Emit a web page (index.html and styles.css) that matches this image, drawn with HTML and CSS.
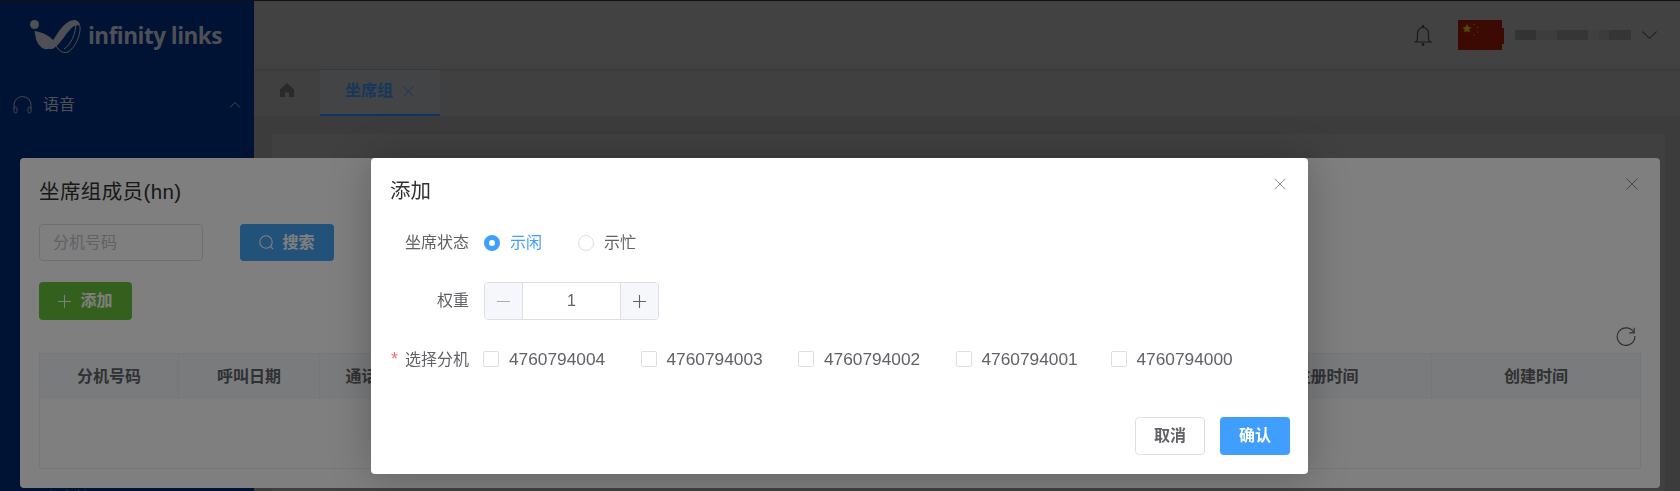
FILE: index.html
```html
<!DOCTYPE html>
<html lang="zh-CN">
<head>
<meta charset="UTF-8">
<title>坐席组</title>
<link rel="stylesheet" href="styles.css">
</head>
<body>
<div class="app">
    <aside class="sidebar">
        <div class="logo">
            <svg class="logo-mark" width="56" height="42" viewBox="0 0 56 42">
                <circle cx="4.5" cy="9.5" r="4.5" fill="#9ca0aa"/>
                <path d="M4.5 16C12 17 20 21 24 26L18 34C12 35 8 30 6 24Z" fill="#9ca0aa"/>
                <path d="M18 34C24 24 30 12 38 7C44 3 50 5 50 11C46 9 42 12 38 17C33 23 28 32 22 34Z" fill="#9ca0aa"/>
                <path d="M50 11C51 20 45 33 38 37C32 39 27 35 24 26M46 8C46 18 41 30 34 34" fill="none" stroke="#9ca0aa" stroke-width="1"/>
            </svg>
            <span class="logo-text">infinity links</span>
        </div>
        <div class="menu-item">
            <svg width="19" height="18" viewBox="0 0 19 18" fill="none" stroke="#8a8f9a" stroke-width="1">
                <path d="M1 13V9a8.500 8.500 0 0 1 17 0v4"/>
                <rect x="1" y="11" width="3" height="6" rx="1.500"/>
                <rect x="15" y="11" width="3" height="6" rx="1.500"/>
            </svg>
            <span class="menu-label">语音</span>
            <svg class="menu-arrow" width="10" height="6" viewBox="0 0 10 6" fill="none" stroke="#8a8f9a" stroke-width="1"><path d="M0 5.500L5 .5l5 5"/></svg>
        </div>
        <div class="menu-sub">坐席管理</div>
    </aside>
    <div class="main">
        <header class="topbar">
            <svg width="20" height="22" viewBox="0 0 20 22" fill="none" stroke="#333" stroke-width="1.200">
                <path d="M1 18h18M3 18c1-1 1.500-2 1.500-4V9a5.500 5.500 0 0 1 11 0v5c0 2 .5 3 1.500 4"/>
                <circle cx="10" cy="2.500" r=".8"/>
                <circle cx="10" cy="20.500" r=".8"/>
            </svg>
            <svg class="flag" width="46" height="30" viewBox="0 0 46 30">
                <rect width="44" height="30" fill="#7a1406"/>
                <rect x="44" y="8" width="2" height="16" fill="#7a1406"/>
                <polygon points="9,4 10.500,7 13.500,7.400 11.200,9.500 11.800,12.500 9,11 6.200,12.500 6.800,9.500 4.500,7.400 7.500,7" fill="#a89010"/>
                <circle cx="16" cy="4.500" r=".8" fill="#906810"/>
                <circle cx="19.500" cy="7.500" r=".8" fill="#906810"/>
                <circle cx="19.500" cy="12" r=".8" fill="#906810"/>
                <circle cx="16" cy="15" r=".8" fill="#906810"/>
            </svg>
            <div class="user-name"></div>
            <svg width="15" height="8" viewBox="0 0 15 8" fill="none" stroke="#444" stroke-width="1.100"><path d="M.4.5L7.500 7.300 14.600.5"/></svg>
        </header>
        <nav class="tabs">
            <svg class="home" width="14" height="14" viewBox="0 0 14 14"><path d="M7 0L14 6.500V14H9V9.500H5V14H0V6.500Z" fill="#555"/></svg>
            <div class="tab">
                <span>坐席组</span>
                <svg width="11" height="11" viewBox="0 0 11 11" stroke="#2f6fb5" stroke-width="1"><path d="M.5.5l10 10M10.500.5l-10 10"/></svg>
            </div>
        </nav>
        <div class="content">
            <div class="card">
                <div class="card-btn"></div>
                <div class="card-row">
                    <span class="cell-left">2</span>
                    <span class="cell-date">2023-02-03 11:07:17</span>
                    <span class="link-a">修改</span>
                    <span class="link-b">转移</span>
                    <span class="link-c">删除</span>
                </div>
            </div>
        </div>
    </div>
</div>

<section class="panel">
    <h2 class="panel-title">坐席组成员(hn)</h2>
    <svg class="close" width="12" height="12" viewBox="0 0 12 12" stroke="#909399" stroke-width="1"><path d="M.5.5l11 11M11.500.5l-11 11"/></svg>
    <div class="search-row">
        <div class="input">分机号码</div>
        <div class="btn btn-search">
            <svg width="15" height="15" viewBox="0 0 15 15" fill="none" stroke="#fff" stroke-width="1.100"><circle cx="7" cy="7" r="6.200"/><path d="M11.500 11.500L14 14"/></svg>
            搜索
        </div>
    </div>
    <div class="btn btn-add">
        <svg width="13" height="13" viewBox="0 0 13 13" stroke="#fff" stroke-width="1.100"><path d="M6.500 0v13M0 6.500h13"/></svg>
        添加
    </div>
    <div class="toolbar">
        <svg width="20" height="20" viewBox="0 0 20 20" fill="none" stroke="#606266" stroke-width="1.200">
            <path d="M17.800 6.500A8.800 8.800 0 1 0 18.800 10"/>
            <path d="M18.200 1.800v5h-5"/>
        </svg>
    </div>
    <div class="table">
        <div class="table-head">
            <div class="th">分机号码</div>
            <div class="th">呼叫日期</div>
            <div class="th">通话时长</div>
            <div class="th"></div>
            <div class="th">注册时间</div>
            <div class="th">创建时间</div>
        </div>
    </div>
</section>

<div class="mask"></div>

<section class="dialog">
    <h2 class="dialog-title">添加</h2>
    <svg class="close" width="12" height="12" viewBox="0 0 12 12" stroke="#909399" stroke-width="1"><path d="M.5.5l11 11M11.500.5l-11 11"/></svg>
    <div class="form">
        <div class="form-row">
            <label class="form-label">坐席状态</label>
            <span class="radio radio-on"></span>
            <span class="radio-text radio-text-on">示闲</span>
            <span class="radio"></span>
            <span class="radio-text">示忙</span>
        </div>
        <div class="form-row">
            <label class="form-label">权重</label>
            <div class="number">
                <span class="number-btn number-minus">
                    <svg width="13" height="13" viewBox="0 0 13 13" stroke="#a8abb2" stroke-width="1.100"><path d="M0 6.500h13"/></svg>
                </span>
                <span class="number-value">1</span>
                <span class="number-btn number-plus">
                    <svg width="13" height="13" viewBox="0 0 13 13" stroke="#606266" stroke-width="1.100"><path d="M6.500 0v13M0 6.500h13"/></svg>
                </span>
            </div>
        </div>
        <div class="form-row form-row-last">
            <label class="form-label"><i class="required">*</i>选择分机</label>
            <div class="checks">
                <div class="check"><span class="check-box"></span>4760794004</div>
                <div class="check"><span class="check-box"></span>4760794003</div>
                <div class="check"><span class="check-box"></span>4760794002</div>
                <div class="check"><span class="check-box"></span>4760794001</div>
                <div class="check"><span class="check-box"></span>4760794000</div>
            </div>
        </div>
    </div>
    <div class="dialog-footer">
        <div class="btn btn-cancel">取消</div>
        <div class="btn btn-ok">确认</div>
    </div>
</section>
</body>
</html>
```

FILE: styles.css
```css
* {box-sizing: border-box;}
html, body {margin: 0;height: 100%;overflow: hidden;}
body {font: 16px/22px "Liberation Sans", "Noto Sans CJK SC", sans-serif;color: #606266;background: #808080;}
h2 {margin: 0;font-weight: 400;}
svg {display: block;flex: none;}

/* page behind the dialogs, colours are halved by .mask */
.app {display: flex;height: 100%;border-top: 1px solid #222;}
.sidebar {width: 254px;flex: none;background: #00266a;color: #9ca0aa;overflow: hidden;}
.logo {display: flex;align-items: center;height: 69px;padding-left: 30px;}
.logo-mark {margin-top: 1px;}
.logo-text {margin-left: 2px;font: 700 22.5px/30px "Open Sans", sans-serif;letter-spacing: -.5px;color: #9ca0aa;}
.menu-item {display: flex;align-items: center;height: 70px;padding: 0 14px 0 13px;}
.menu-label {margin-left: 11px;}
.menu-arrow {margin-left: auto;}
.menu-sub {margin: 348px 0 0 43px;}

.main {flex: 1;display: flex;flex-direction: column;min-width: 0;overflow: hidden;}
.topbar {display: flex;align-items: center;justify-content: flex-end;height: 69px;padding-right: 23px;background: #848484;border-bottom: 1px solid #747474;flex: none;}
.flag {margin-left: 25px;}
.user-name {width: 116px;height: 10px;margin: 0 11px 0 11px;filter: blur(.6px);background: linear-gradient(90deg, #666 0 18%, #7a7a7a 18% 36%, #6c6c6c 36% 63%, #808080 63% 72%, #787878 72% 81%, #6a6a6a 81%);}
.tabs {display: flex;align-items: stretch;height: 47px;padding-left: 26px;background: #808080;border-bottom: 1px solid #7a7a7a;flex: none;}
.home {margin: 13px 26px 0 0;}
.tab {display: flex;align-items: center;gap: 10px;width: 120px;padding: 0 0 2px 25px;color: #2f6fb5;font-weight: 700;background: #84888c;border-bottom: 2px solid #1f68c0;}
.content {flex: 1;padding: 17px 15px 0 18px;background: #787878;min-height: 0;overflow: hidden;}
.card {height: 400px;padding-top: 24px;background: #808080;}
.card-btn {width: 88px;height: 30px;margin-left: 653px;background: #2a6ab0;}
.card-row {display: flex;margin-top: 301px;color: #303133;}
.cell-left {margin-left: 130px;}
.cell-date {margin-left: 719px;width: 158px;white-space: nowrap;}
.link-a {margin-left: 146px;color: #2d4fa8;}
.link-b {margin-left: 17px;color: #2d4fa8;}
.link-c {margin-left: 19px;color: #a33;}

/* first dialog, under the mask */
.panel {position: fixed;left: 20px;top: 158px;width: 1640px;height: 330px;padding: 22px 19px 0;background: #fff;border-radius: 4px;}
.panel-title {font-size: 20.5px;line-height: 24px;letter-spacing: .4px;color: #303133;}
.close {position: absolute;right: 22px;top: 20px;}
.search-row {display: flex;gap: 37px;margin-top: 20px;}
.input {width: 164px;height: 37px;padding-left: 13px;line-height: 35px;color: #c0c4cc;border: 1px solid #dcdfe6;border-radius: 4px;}
.btn {display: flex;align-items: center;justify-content: center;border-radius: 4px;font-weight: 700;}
.btn-search {gap: 8px;width: 94px;height: 37px;color: #fff;background: #44a4f5;}
.btn-add {gap: 9px;width: 93px;height: 38px;margin-top: 21px;color: #fff;background: #68c03a;}
.toolbar {display: flex;justify-content: flex-end;height: 20px;margin-top: 6px;padding-right: 5px;}
.table {height: 116px;margin-top: 7px;margin-right: 0;width: 1602px;border: 1px solid #ebeef5;}
.table-head {display: grid;grid-template-columns: 139px 141px 116px 1fr 210px 208px;height: 45px;background: #f5f7fa;}
.th {font-weight: 700;line-height: 45px;text-align: center;border-right: 1px solid #ebeef5;}
.th:last-child {border-right: 0;}

.mask {position: fixed;inset: 0;background: rgba(0, 0, 0, .5);}

/* second dialog, on top */
.dialog {position: fixed;left: 371px;top: 158px;width: 937px;height: 316px;padding: 21px 18px 0 19px;background: #fff;border-radius: 4px;box-shadow: 0 2px 40px rgba(0, 0, 0, .25);}
.dialog .close {right: 22px;top: 20px;}
.dialog-title {font-size: 20.5px;line-height: 24px;color: #303133;}
.form {margin-top: 21px;}
.form-row {display: flex;align-items: center;height: 38px;margin-bottom: 20px;}
.form-row-last {margin: 20px 0 0;}
.form-label {width: 79px;flex: none;margin-right: 15px;text-align: right;white-space: nowrap;}
.required {margin-right: 7px;font-style: normal;font-size: 18px;color: #f56c6c;}
.radio {width: 16px;height: 16px;flex: none;border: 1px solid #dcdfe6;border-radius: 50%;background: #fff;}
.radio-on {border: 5px solid #409eff;}
.radio-text {margin-left: 10px;width: 68px;}
.radio-text-on {color: #409eff;}
.number {display: flex;width: 175px;height: 38px;border: 1px solid #dcdfe6;border-radius: 4px;overflow: hidden;}
.number-btn {display: flex;align-items: center;justify-content: center;width: 38px;flex: none;background: #f5f7fa;}
.number-minus {border-right: 1px solid #dcdfe6;}
.number-plus {border-left: 1px solid #dcdfe6;}
.number-value {flex: 1;text-align: center;line-height: 36px;}
.checks {display: flex;margin-left: -1px;}
.check {display: flex;align-items: center;gap: 10px;width: 157.5px;font-size: 17.3px;}
.check:nth-child(4) {width: 155px;}
.check-box {width: 16px;height: 16px;flex: none;border: 1px solid #dcdfe6;border-radius: 2px;background: #fff;}
.dialog-footer {display: flex;justify-content: flex-end;gap: 15px;margin-top: 39px;}
.btn-cancel, .btn-ok {width: 70px;height: 38px;}
.btn-cancel {color: #606266;border: 1px solid #dcdfe6;}
.btn-ok {color: #fff;background: #409eff;}
```
